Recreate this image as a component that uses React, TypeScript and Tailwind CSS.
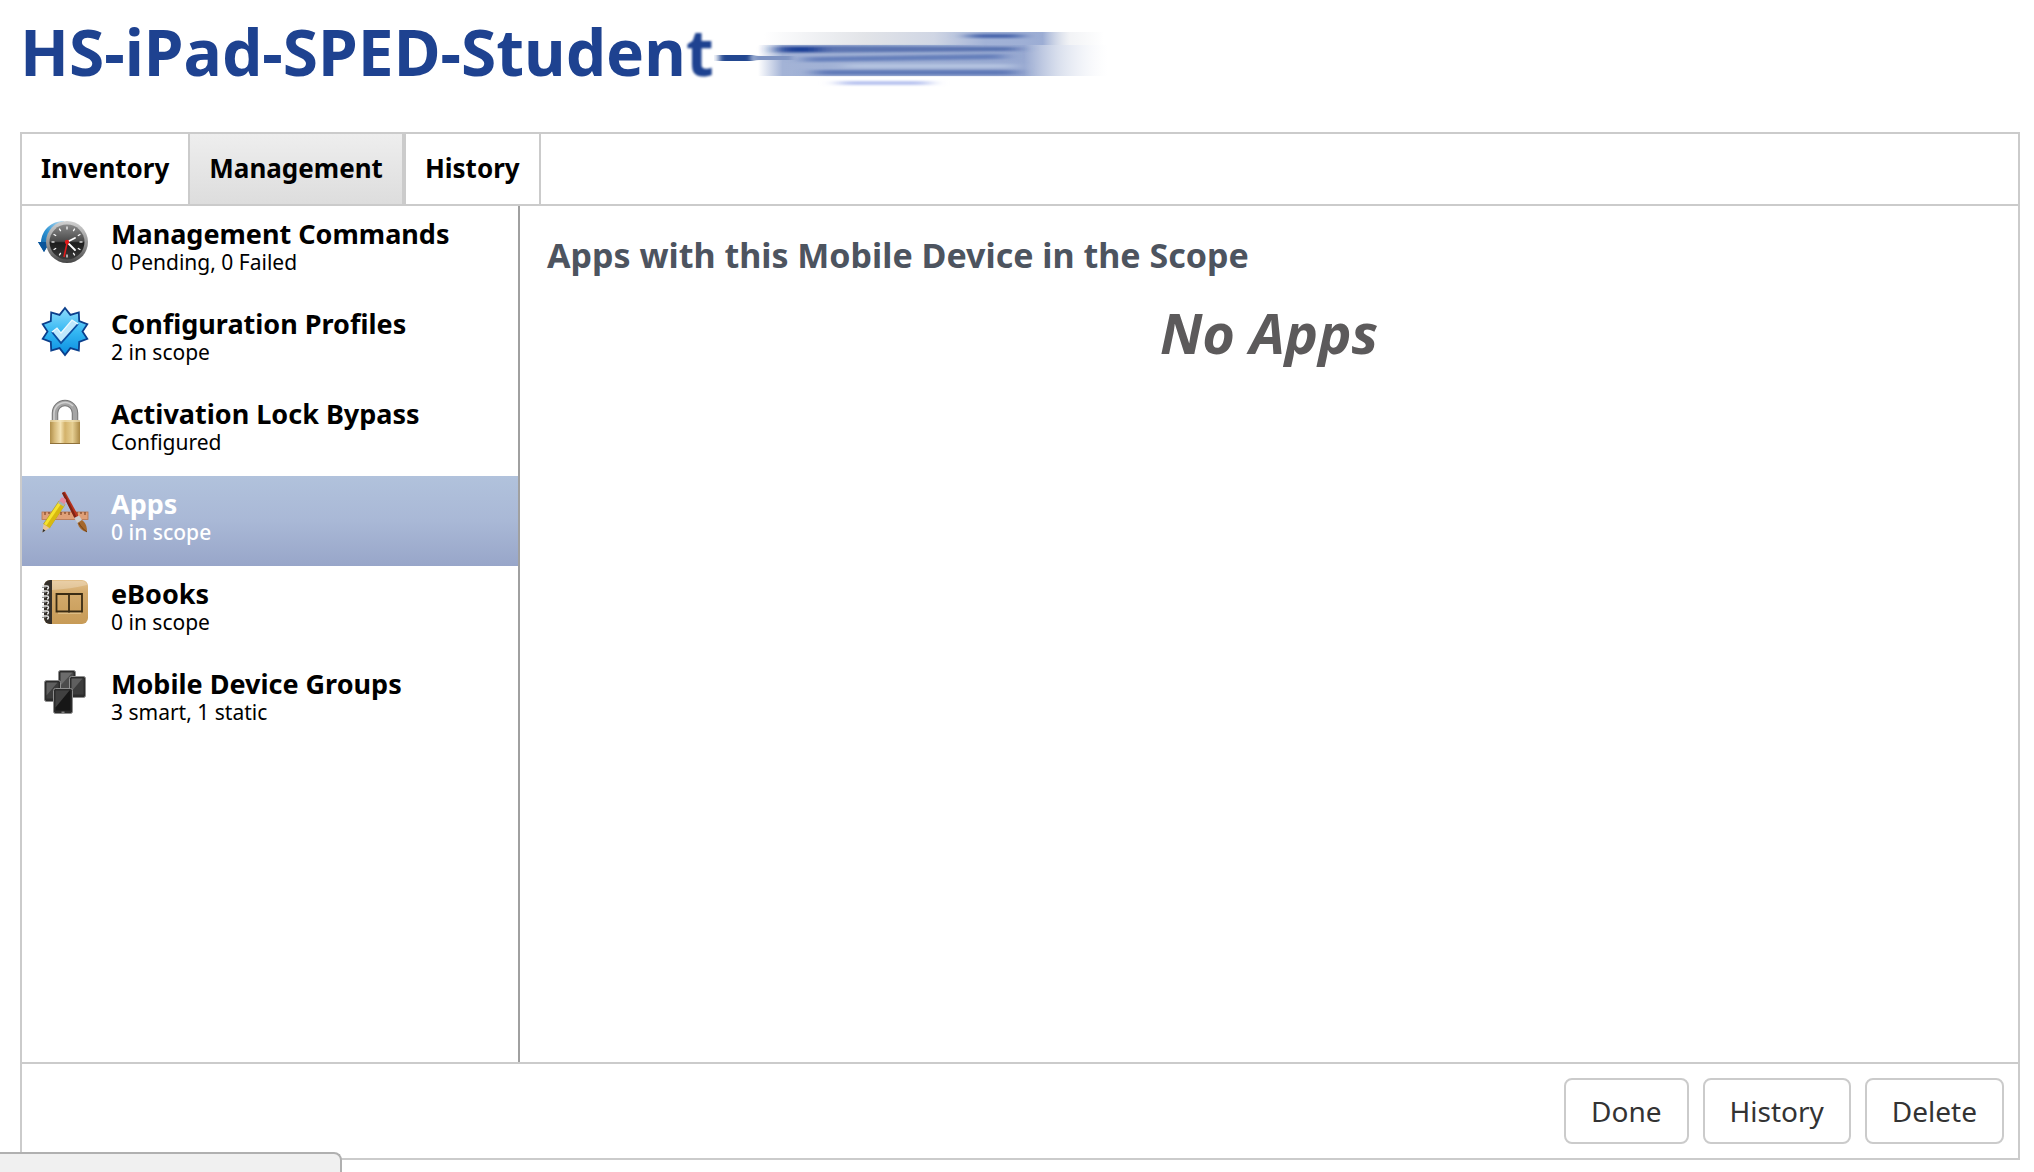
import React from 'react';
import clsx from 'clsx';

type NavItem = {
  id: string;
  title: string;
  detail: string;
  icon: React.ReactNode;
};

const ClockIcon = () => (
  <svg viewBox="0 0 52 52" className="size-[52px]" aria-hidden="true">
    <defs>
      <linearGradient id="clock-rim" x1="0" y1="0" x2="0" y2="1">
        <stop offset="0" stopColor="#d2d2d2" />
        <stop offset="0.6" stopColor="#8c8c8c" />
        <stop offset="1" stopColor="#454545" />
      </linearGradient>
      <linearGradient id="clock-face" x1="0" y1="0" x2="0" y2="1">
        <stop offset="0" stopColor="#8a8a8a" />
        <stop offset="0.48" stopColor="#4a4a4a" />
        <stop offset="0.52" stopColor="#1c1c1c" />
        <stop offset="1" stopColor="#3a3a3a" />
      </linearGradient>
      <linearGradient id="clock-arrow" x1="1" y1="0" x2="0" y2="1">
        <stop offset="0" stopColor="#c5e4f5" />
        <stop offset="0.5" stopColor="#2d93d3" />
        <stop offset="1" stopColor="#0a559b" />
      </linearGradient>
    </defs>
    <path d="M26 5C13 5 4 14 3 26H0l6 10 6-10H9C9 17 15 9 26 7z" fill="url(#clock-arrow)" />
    <path d="M0 26h12L6 36z" fill="#0a559b" />
    <circle cx="29" cy="26" r="21" fill="url(#clock-rim)" />
    <circle cx="29" cy="26" r="17.5" fill="url(#clock-face)" />
    <g stroke="#fff" strokeWidth="1.2">
      {[0, 30, 60, 90, 120, 150, 180, 210, 240, 270, 300, 330].map(angle => (
        <path key={angle} d="M29 10.500v3" transform={`rotate(${angle} 29 26)`} />
      ))}
    </g>
    <path d="M29 26l8-4M29 26l8 8" stroke="#fff" strokeWidth="1.8" strokeLinecap="round" />
    <path d="M29.500 25L26 41" stroke="#e01b1b" strokeWidth="1.6" />
    <circle cx="29" cy="26" r="2.200" fill="#e01b1b" />
  </svg>
);

const starPoints = Array.from({ length: 20 }, (_, i) => {
  const r = i % 2 === 0 ? 23.5 : 17.5;
  const a = (Math.PI * i) / 10;
  return `${(27 + r * Math.sin(a)).toFixed(1)},${(25.5 - r * Math.cos(a)).toFixed(1)}`;
}).join(' ');

const BadgeIcon = () => (
  <svg viewBox="0 0 52 52" className="size-[52px]" aria-hidden="true">
    <defs>
      <linearGradient id="badge-fill" x1="0" y1="0" x2="0" y2="1">
        <stop offset="0" stopColor="#8fdcfb" />
        <stop offset="0.5" stopColor="#35b8f3" />
        <stop offset="1" stopColor="#0a8ee0" />
      </linearGradient>
    </defs>
    <polygon points={starPoints} fill="url(#badge-fill)" stroke="#0b3f8c" strokeWidth="1.8" />
    <path d="M14 26l5-4 4 5L34 14l6 4-17 19z" fill="#bfe9fd" />
    <path d="M14 26l9 11L40 18" fill="none" stroke="#0b4da0" strokeWidth="1.8" />
    <path d="M14 26l5-4 4 5L34 14l6 4" fill="none" stroke="#eefaff" strokeWidth="1.2" />
  </svg>
);

const LockIcon = () => (
  <svg viewBox="0 0 52 52" className="size-[52px]" aria-hidden="true">
    <defs>
      <linearGradient id="lock-body" x1="0" y1="0" x2="1" y2="0">
        <stop offset="0" stopColor="#b08f4b" />
        <stop offset="0.15" stopColor="#d5b878" />
        <stop offset="0.35" stopColor="#f4e3b4" />
        <stop offset="0.5" stopColor="#d3b26a" />
        <stop offset="0.75" stopColor="#e6cf93" />
        <stop offset="1" stopColor="#a98743" />
      </linearGradient>
    </defs>
    <path d="M17 25V17a10 10 0 0 1 20 0v8" fill="none" stroke="#777" strokeWidth="6.500" />
    <path d="M17 25V17a10 10 0 0 1 20 0v8" fill="none" stroke="#a5a5a5" strokeWidth="4.500" />
    <path d="M16 25V17a11 11 0 0 1 19-7" fill="none" stroke="#d0d0d0" strokeWidth="1.500" />
    <rect x="12" y="24" width="30" height="24" rx="1" fill="url(#lock-body)" />
    <path d="M12 25h30" stroke="#f3e6bf" strokeWidth="1.200" />
    <path d="M12 47.500h30" stroke="#8f713a" />
  </svg>
);

const AppsIcon = () => (
  <svg viewBox="0 0 52 52" className="size-[52px]" aria-hidden="true">
    <rect x="4" y="26" width="46" height="7.500" fill="#e0a078" stroke="#b9744c" strokeWidth="0.800" />
    <path
      d="M7 26v3M11 26v2M15 26v3M19 26v2M23 26v3M27 26v2M31 26v3M35 26v2M39 26v3M43 26v2M47 26v3"
      stroke="#6d3417"
    />
    <path d="M24 7l3-1.500L41 31l-4 2z" fill="#b8321d" />
    <path d="M24 7l2-1 13 26-2 1z" fill="#7f2314" />
    <path d="M36 32l5-2.500 3 4.500-4.500 3z" fill="#c9ccd0" />
    <path d="M39.500 37l4.500-3c4 3 5 7 5 12-5-1-8-4-9.500-9z" fill="#a5682c" />
    <path d="M41 37c1 3 4 6 8 9" fill="none" stroke="#6c3d14" />
    <path d="M21 15l6 3.500L11.500 42 5.500 38z" fill="#f6e32d" stroke="#a58f10" strokeWidth="0.600" />
    <path d="M24 16.500L8 40l3.500 2L27 18.500z" fill="#d8b90f" />
    <path d="M21 15l2-3c1-1.500 6 1 5 3l-1.500 3.500z" fill="#e68aa0" />
    <path d="M20 17l5.500 3.500 1.500-2L21.500 15z" fill="#aab1b8" />
    <path d="M5.500 38l6 4-7 4.500z" fill="#e9c596" />
    <path d="M5 43l2.500 1.500-3 2z" fill="#333" />
  </svg>
);

const BookIcon = () => (
  <svg viewBox="0 0 52 52" className="size-[52px]" aria-hidden="true">
    <defs>
      <linearGradient id="book-cover" x1="0" y1="0" x2="0" y2="1">
        <stop offset="0" stopColor="#e3c08b" />
        <stop offset="0.3" stopColor="#d3aa6c" />
        <stop offset="1" stopColor="#c79b57" />
      </linearGradient>
    </defs>
    <rect x="6" y="4" width="44" height="44" rx="6" fill="url(#book-cover)" />
    <path d="M14 4H12a6 6 0 0 0-6 6v32a6 6 0 0 0 6 6h2z" fill="#35302a" />
    <path d="M14 5h30q4 0 5 4-16 4-35 5z" fill="#fff" opacity="0.25" />
    {[10, 15, 20, 25, 30, 35, 40].map(y => (
      <g key={y}>
        <path d={`M4 ${y}h5a1.500 1.500 0 0 1 0 3`} fill="none" stroke="#e4e4e4" strokeWidth="1.400" />
        <path d={`M4 ${y + 1.5}h4`} stroke="#777" strokeWidth="0.800" />
      </g>
    ))}
    <path d="M18.500 18H44v17.500H18.500zM31 18v19" fill="none" stroke="#3a2c14" strokeWidth="1.800" />
    <path d="M20 37.200h23" stroke="#edd3a3" strokeWidth="0.800" />
  </svg>
);

const Tablet = ({ x, y, w, h, fill }: { x: number; y: number; w: number; h: number; fill: string }) => (
  <g>
    <rect x={x} y={y} width={w} height={h} rx="2" fill="#2c2c2c" stroke="#8e8e8e" strokeWidth="1" />
    <rect x={x + 2} y={y + 2} width={w - 4} height={h - 5} fill={fill} />
    <path d={`M${x + 2} ${y + 2}h${w - 5}L${x + 2} ${y + h - 6}z`} fill="#fff" opacity="0.18" />
  </g>
);

const DevicesIcon = () => (
  <svg viewBox="0 0 52 52" className="size-[52px]" aria-hidden="true">
    <Tablet x={20.5} y={4.5} w={17} h={21} fill="#4c4c4c" />
    <Tablet x={6.5} y={14.5} w={16} h={21} fill="#3c3c3c" />
    <Tablet x={31.5} y={10.5} w={16} h={21} fill="#3c3c3c" />
    <Tablet x={15.5} y={22.5} w={19} h={25} fill="#161616" />
    <path d="M23.500 46.200h3" stroke="#aaa" />
  </svg>
);

/* Smeared part of the device name */
const RedactedName = () => (
  <svg viewBox="0 -14 404 72" className="h-[72px] w-[404px]" aria-hidden="true">
    <defs>
      <linearGradient id="smear-main" x1="0" x2="1">
        <stop offset="0" stopColor="#a3b3d6" stopOpacity="0" />
        <stop offset="0.07" stopColor="#a3b3d6" />
        <stop offset="0.76" stopColor="#98a9d1" />
        <stop offset="0.86" stopColor="#b5c1dc" stopOpacity="0.5" />
        <stop offset="1" stopColor="#e6eaf3" stopOpacity="0" />
      </linearGradient>
      <linearGradient id="smear-top" x1="0" x2="1">
        <stop offset="0" stopColor="#dfe2e8" stopOpacity="0" />
        <stop offset="0.3" stopColor="#e2e4e8" />
        <stop offset="0.5" stopColor="#d0d6e4" />
        <stop offset="0.65" stopColor="#a3b3d7" />
        <stop offset="0.82" stopColor="#9cadd4" />
        <stop offset="0.9" stopColor="#dfe2e8" stopOpacity="0.4" />
        <stop offset="1" stopColor="#dfe2e8" stopOpacity="0" />
      </linearGradient>
      <filter id="smear-soft" x="-30%" y="-100%" width="160%" height="300%">
        <feGaussianBlur stdDeviation="9 1.300" />
      </filter>
      <filter id="smear-dash" x="-30%" y="-100%" width="160%" height="300%">
        <feGaussianBlur stdDeviation="3 0.5" />
      </filter>
    </defs>
    <rect x="50" y="2" width="340" height="13" fill="url(#smear-top)" />
    <rect x="44" y="15" width="350" height="31" fill="url(#smear-main)" />
    <g filter="url(#smear-soft)">
      <path d="M64 16h60l180 1v4L64 23z" fill="#3f5ca3" opacity="0.700" />
      <path d="M64 17h42v5H64z" fill="#1d4096" />
      <path d="M90 27l200-3v5L90 32z" fill="#5874b5" opacity="0.800" />
      <path d="M100 40h202v5H100z" fill="#4c69af" opacity="0.750" />
      <path d="M255 4h52v4h-52z" fill="#4866ac" />
      <path d="M130 34h170v4H130z" fill="#b9c8e4" opacity="0.800" />
      <path d="M125 51h90v4h-90z" fill="#a9b7ec" opacity="0.800" />
    </g>
    <path d="M5 25h34v6H5z" fill="#234690" filter="url(#smear-dash)" />
    <path d="M38 26h40v4H38z" fill="#7f94c3" filter="url(#smear-dash)" />
  </svg>
);

const tabs = ['Inventory', 'Management', 'History'];

const items: NavItem[] = [
  { id: 'commands', title: 'Management Commands', detail: '0 Pending, 0 Failed', icon: <ClockIcon /> },
  { id: 'profiles', title: 'Configuration Profiles', detail: '2 in scope', icon: <BadgeIcon /> },
  { id: 'lock', title: 'Activation Lock Bypass', detail: 'Configured', icon: <LockIcon /> },
  { id: 'apps', title: 'Apps', detail: '0 in scope', icon: <AppsIcon /> },
  { id: 'ebooks', title: 'eBooks', detail: '0 in scope', icon: <BookIcon /> },
  { id: 'groups', title: 'Mobile Device Groups', detail: '3 smart, 1 static', icon: <DevicesIcon /> },
];

const App = () => {
  const [activeTab, setActiveTab] = React.useState('Management');
  const [activeItem, setActiveItem] = React.useState('apps');

  return (
    <div className="relative flex min-h-screen flex-col bg-white pt-4 pr-[14px] pb-3 pl-5 font-['Noto_Sans','Open_Sans',sans-serif] text-black">
      <header className="mb-11 flex items-center">
        <h1 className="text-[64px] leading-[72px] font-bold whitespace-nowrap text-[#1e4290]">
          HS-iPad-SPED-Studen<span className="blur-[1px]">t</span>
        </h1>
        <RedactedName />
      </header>

      <main className="flex flex-1 flex-col border-2 border-[#cbcbcb]">
        <nav className="flex h-[72px] border-b-2 border-[#cbcbcb]">
          {tabs.map(tab => (
            <button
              key={tab}
              type="button"
              onClick={() => setActiveTab(tab)}
              className={clsx(
                'border-[#cbcbcb] px-[19px] pb-0.5 text-[26px] font-bold',
                tab === activeTab ? 'border-r-4 bg-linear-to-b from-[#eeeeee] to-[#dddddd]' : 'border-r-2'
              )}
            >
              {tab}
            </button>
          ))}
        </nav>

        <div className="flex flex-1">
          <aside className="w-[498px] shrink-0 border-r-2 border-[#a0a0a0]">
            {items.map(item => (
              <button
                key={item.id}
                type="button"
                onClick={() => setActiveItem(item.id)}
                className={clsx(
                  'flex h-[90px] w-full items-start gap-[21px] pl-4 text-left',
                  item.id === activeItem &&
                    'bg-linear-to-b from-[#b1c2dc] via-[#a9b8d6] to-[#98a6c9] text-white'
                )}
              >
                <span className="pt-2.5">{item.icon}</span>
                <span className="flex flex-col pt-3">
                  <span className="text-[27px] leading-8 font-bold">{item.title}</span>
                  <span className={clsx('text-[21px] leading-6', item.id === activeItem && 'font-medium')}>
                    {item.detail}
                  </span>
                </span>
              </button>
            ))}
          </aside>

          <section className="flex-1 px-[27px] pt-7">
            <h2 className="text-[34px] leading-[42px] font-bold text-[#4d545f]">
              Apps with this Mobile Device in the Scope
            </h2>
            <p className="mt-6 text-center text-[56px] leading-[64px] font-bold text-[#5c5a5b] italic">
              No Apps
            </p>
          </section>
        </div>

        <footer className="flex justify-end gap-[14px] border-t-2 border-[#cbcbcb] p-[14px]">
          {['Done', 'History', 'Delete'].map(label => (
            <button
              key={label}
              type="button"
              className="rounded-lg border-2 border-[#cbcbcb] px-[25px] py-[13px] text-[28px] leading-9 text-[#333333]"
            >
              {label}
            </button>
          ))}
        </footer>
      </main>

      <div className="absolute bottom-0 left-0 h-5 w-[342px] rounded-tr-lg border-t-2 border-r-2 border-[#b0b0b0] bg-[#f0f0f0]" />
    </div>
  );
};

export default App;
